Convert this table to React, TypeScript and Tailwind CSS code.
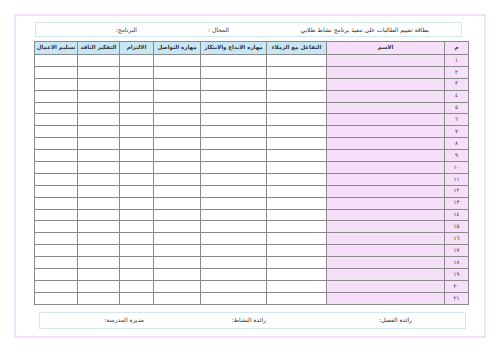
const columns = [
  { label: "م", w: "w-[24px]", pink: true },
  { label: "الاسم", w: "w-[118px]", pink: true },
  { label: "التفاعل مع الزملاء", w: "w-[60px]", pink: false },
  { label: "مهارة الابداع والابتكار", w: "w-[66px]", pink: false },
  { label: "مهارة التواصل", w: "w-[47px]", pink: false },
  { label: "الالتزام", w: "w-[34px]", pink: false },
  { label: "التفكير الناقد", w: "w-[42px]", pink: false },
  { label: "تسليم الاعمال", w: "w-[43px]", pink: false },
];

const toArabic = (n: number) =>
  String(n).replace(/\d/g, (d) => "٠١٢٣٤٥٦٧٨٩"[Number(d)]);

export default function App() {
  const rows = Array.from({ length: 21 }, (_, i) => i + 1);

  return (
    <div
      className="w-[500px] h-[353px] bg-white pt-[14px] text-[#333]"
      style={{ fontFamily: '"DejaVu Sans", "Noto Sans", sans-serif' }}
      dir="rtl"
    >
      <div className="mx-[14px] h-[324px] border-2 border-[#f1e4f9]">
        {/* title bar */}
        <div className="mt-[6px] mr-[22px] ml-[19px] h-[15px] border border-[#cfe8f4] flex items-center text-[6px] leading-none">
          <span className="w-[200px] mr-[32px]">بطاقة تقييم الطالبات على تنفيذ برنامج نشاط طلابي</span>
          <span className="w-[92px]">المجال :</span>
          <span>البرنامج:</span>
        </div>

        {/* grid */}
        <table className="mt-[4px] mr-[15px] ml-[19px] w-[434px] table-fixed border-collapse text-[5.5px] leading-none">
          <thead>
            <tr className="h-[13px]">
              {columns.map((c) => (
                <th
                  key={c.label}
                  className={`${c.w} border border-[#8a8a8a] font-semibold text-center ${
                    c.pink ? "bg-[#f5dff9]" : "bg-[#c9e6f5]"
                  }`}
                >
                  {c.label}
                </th>
              ))}
            </tr>
          </thead>
          <tbody>
            {rows.map((r) => (
              <tr key={r} className="h-[11.9px]">
                {columns.map((c, i) => (
                  <td
                    key={c.label}
                    className={`border border-[#8a8a8a] p-0 text-center ${c.pink ? "bg-[#f5dff9]" : ""}`}
                  >
                    {i === 0 ? toArabic(r) : ""}
                  </td>
                ))}
              </tr>
            ))}
          </tbody>
        </table>

        {/* signatures */}
        <div className="mt-[7px] mr-[18px] ml-[23px] h-[17px] border-[1.5px] border-[#cfe8f4] flex items-center text-[6px] leading-none">
          <span className="w-[146px] mr-[53px]">رائدة الفصل:</span>
          <span className="w-[122px]">رائدة النشاط:</span>
          <span>مديرة المدرسة:</span>
        </div>
      </div>
    </div>
  );
}
